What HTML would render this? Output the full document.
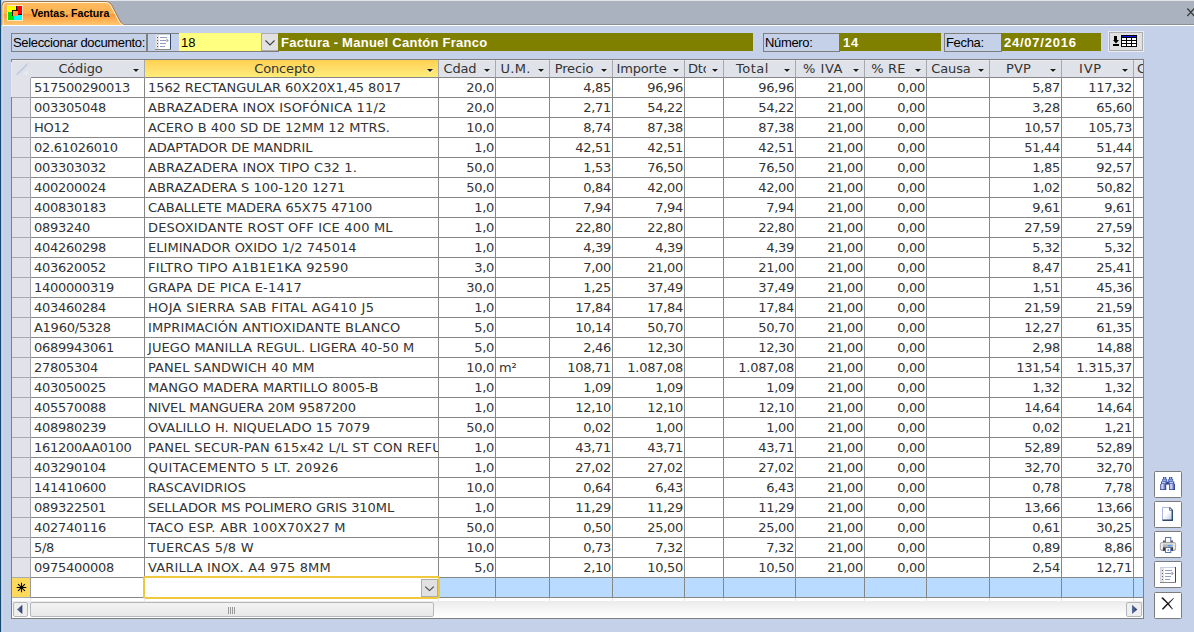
<!DOCTYPE html>
<html lang="es"><head><meta charset="utf-8"><title>Ventas. Factura</title>
<style>
html,body{margin:0;padding:0}
body{width:1194px;height:632px;overflow:hidden;background:#c4d1e9;position:relative;font-family:"Liberation Sans",sans-serif;font-size:13px;color:#000}
.a{position:absolute;box-sizing:border-box}
#tbar{left:0;top:0;width:1194px;height:25px;background:#abb2bf;border-top:1px solid #e2e5ea;border-bottom:1px solid #8a919e}
#lstrip{left:0;top:0;width:3px;height:632px;background:#b9c8d5;border-left:1px solid #154873;border-right:1px solid #d0daed}
#lstrip2{left:2px;top:25px;width:1px;height:607px;background:#9fb3d6}
#wline{left:2px;top:25px;width:1192px;height:1px;background:#fff}
.fld{height:19px;top:33px;line-height:17px;white-space:nowrap;overflow:hidden}
.lab{border:1px solid #7f7f7f;background:#c4d1e9;padding-left:1px;letter-spacing:-0.34px}
.olv{background:#808000;color:#fff;font-weight:bold;padding-left:3px;line-height:19px;height:18px}
#grid{left:11px;top:59px;width:1133px;height:560px;border:1px solid #7f7f7f;background:#fff;overflow:hidden}
.g{font-family:"DejaVu Sans","Liberation Sans",sans-serif;font-size:13px;color:#333;white-space:nowrap}
.hd{top:0;height:18px;background:#dfe2e8;border-right:1px solid #a6a9ae;border-bottom:1px solid #868686;box-shadow:inset 0 1px 0 #e9ebef;line-height:18px;text-align:center;overflow:hidden;letter-spacing:-0.15px}
.hd.sel{background:linear-gradient(#ffd050,#ffe06c 55%,#ffed7a);box-shadow:none}
.hd i{position:absolute;right:5.5px;top:9px;width:0;height:0;border-left:3px solid transparent;border-right:3px solid transparent;border-top:3.5px solid #1c1c1c;filter:drop-shadow(0 1px 0 rgba(255,255,255,.85))}
.row{left:0;width:1133px;height:20px}
.rs{left:0;top:0;width:19px;height:20px;background:#e1e3e8;border-right:1px solid #a0a4aa;border-bottom:1px solid #a8acb2}
.c{top:0;height:20px;border-right:1px solid #868686;border-bottom:1px solid #868686;line-height:19px;overflow:hidden;padding:0 1px 0 3px;letter-spacing:-0.27px}
.r{text-align:right}
.btn{left:1154px;width:28px;height:27px;background:#fff;border:1px solid #7c7c7c;border-radius:1.5px}
</style></head><body>
<div class="a" id="tbar"></div>
<div class="a" id="lstrip"></div>

<svg class="a" style="left:0;top:0" width="140" height="26" viewBox="0 0 140 26">
<defs><linearGradient id="tg" x1="0" y1="0" x2="0" y2="1"><stop offset="0" stop-color="#ffbc62"/><stop offset="0.5" stop-color="#ffb250"/><stop offset="0.52" stop-color="#fb983a"/><stop offset="0.75" stop-color="#ffb054"/><stop offset="1" stop-color="#ffc870"/></linearGradient></defs>
<path d="M2 25.500 V5.500 Q2 1.500 6 1.500 H105 C109.500 1.500 111 3.500 112.500 6.500 L119.800 20.500 C121.300 23.200 122.800 24.600 125.500 25.500 Z" fill="url(#tg)"/><path d="M2 25.500 V5.500 Q2 1.500 6 1.500 H105 C109.500 1.500 111 3.500 112.500 6.500 L119.800 20.500 C121.300 23.200 122.800 24.600 125.500 25.500" fill="none" stroke="#9a7b4f" stroke-width="1"/>
<path d="M3 25 V6 Q3 2.500 6.500 2.500 H105 C108.500 2.500 110 4 111.500 7 L118.800 21 C120.300 23.800 121.800 24.800 124 25.400" fill="none" stroke="#fff3de" stroke-width="1"/>
<rect x="7.500" y="5.500" width="15" height="15" fill="none" stroke="#ffe6c4" stroke-width="1"/>
<g shape-rendering="crispEdges"><rect x="8" y="6" width="8" height="6" fill="#ffff00"/><rect x="16" y="6" width="6" height="9" fill="#ff0000"/>
<rect x="8" y="12" width="6" height="8" fill="#00e400"/><rect x="14" y="15" width="8" height="5" fill="#00ffff"/>
<rect x="12" y="10" width="6" height="6" fill="#1a1000"/><rect x="16" y="6" width="1" height="5" fill="#1a1000"/><rect x="18" y="14" width="4" height="1" fill="#500000"/>
<rect x="13" y="11" width="5" height="5" fill="#ff9a36"/></g>
</svg>
<div class="a" style="left:31px;top:5px;font-size:10.6px;font-weight:bold;line-height:16px;white-space:nowrap">Ventas. Factura</div>
<svg class="a" style="left:1186px;top:7px" width="10" height="10" viewBox="0 0 10 10"><path d="M1.300 1.500 L8.300 9 M8.300 1.500 L1.300 9" stroke="#3c3c3c" stroke-width="1.300" fill="none"/></svg>

<div class="a" id="wline"></div>
<div class="a fld lab" style="left:11px;width:136px">Seleccionar documento:</div>
<div class="a" style="left:147px;top:33px;width:132px;height:19px;border:1px solid #7f7f7f;border-right:0"></div>
<svg class="a" style="left:155px;top:34px" width="16" height="16" viewBox="0 0 16 16" shape-rendering="crispEdges"><rect x="0" y="0" width="16" height="16" fill="#fff"/><rect x="0" y="0" width="4" height="16" fill="#e4e4e6"/><rect x="0" y="0" width="16" height="1" fill="#c6cfdf"/><rect x="0" y="0" width="1" height="16" fill="#d4d8df"/><rect x="15" y="0" width="1" height="16" fill="#2f4870"/><rect x="0" y="15" width="16" height="1" fill="#868686"/>
<g fill="#5c5c5c"><rect x="2" y="3" width="1" height="1"/><rect x="2" y="6" width="1" height="1"/><rect x="2" y="9" width="1" height="1"/><rect x="2" y="12" width="1" height="1"/></g>
<g fill="#8e9cc6"><rect x="5" y="3" width="7" height="1"/><rect x="5" y="6" width="6" height="1"/><rect x="5" y="9" width="6" height="1"/><rect x="5" y="12" width="5" height="1"/></g>
<path d="M11.5 4.5 L13.800 6.500 L11.500 8.500Z" fill="#9a9a9a" shape-rendering="auto"/></svg>
<div class="a fld" style="left:179px;width:83px;height:18px;background:#ffff80;padding-left:2px;line-height:19px">18</div>
<div class="a" style="left:261px;top:33px;width:18px;height:18px;background:#e1e1e1;border:1px solid #adadad"></div>
<svg class="a" style="left:264px;top:39px" width="12" height="8" viewBox="0 0 12 8"><path d="M1.500 1.500 L6 6 L10.500 1.500" fill="none" stroke="#404040" stroke-width="1.100"/></svg>
<div class="a fld olv" style="left:278px;width:475px;letter-spacing:0.26px">Factura - Manuel Cantón Franco</div>
<div class="a fld lab" style="left:763px;width:77px">Número:</div>
<div class="a fld olv" style="left:839px;width:102px;padding-left:4px;letter-spacing:0.76px">14</div>
<div class="a fld lab" style="left:944px;width:58px">Fecha:</div>
<div class="a fld olv" style="left:1001px;width:100px;letter-spacing:0.76px">24/07/2016</div>
<div class="a" style="left:1109px;top:32px;width:34px;height:19px;background:#e1e1e1;border:1px solid #adadad;outline:1px solid #e9ecf2;outline-offset:0"></div>
<svg class="a" style="left:1112px;top:35px" width="26" height="13" viewBox="0 0 26 13" shape-rendering="crispEdges"><g fill="#000"><rect x="2" y="1" width="3" height="4"/><rect x="1" y="9" width="6" height="2"/><path d="M1 5H7L4 8.500Z" shape-rendering="auto"/><rect x="9" y="0" width="16" height="12"/></g><rect x="10" y="1" width="14" height="1" fill="#1414e6"/><g fill="#fff"><rect x="10" y="3" width="4" height="2"/><rect x="15" y="3" width="4" height="2"/><rect x="20" y="3" width="4" height="2"/><rect x="10" y="6" width="4" height="2"/><rect x="15" y="6" width="4" height="2"/><rect x="20" y="6" width="4" height="2"/><rect x="10" y="9" width="4" height="2"/><rect x="15" y="9" width="4" height="2"/><rect x="20" y="9" width="4" height="2"/></g></svg>

<div class="a g" id="grid">
<div class="a hd" style="left:0;width:19px;height:38px;border-right:0;border-bottom:0"><svg style="position:absolute;left:4px;top:3px" width="12" height="12" viewBox="0 0 12 12"><defs><linearGradient id="cg" x1="0" y1="0" x2="1" y2="1"><stop offset="0.45" stop-color="#bcc8e0"/><stop offset="0.62" stop-color="#d9dee9"/><stop offset="1" stop-color="#eef0f5"/></linearGradient></defs><path d="M11.5 0.5V11.500H0.500Z" fill="url(#cg)"/><path d="M11.500 0.500L0.500 11.500" stroke="#b3c1df" stroke-width="1" fill="none"/></svg></div>
<div class="a hd" style="left:19px;width:114px;padding-right:14px">Código<i></i></div>
<div class="a hd sel" style="left:133px;width:294px;padding-right:14px">Concepto<i></i></div>
<div class="a hd" style="left:427px;width:57px;padding-right:14px">Cdad<i></i></div>
<div class="a hd" style="left:484px;width:54px;padding-right:14px;letter-spacing:0.30px">U.M.<i></i></div>
<div class="a hd" style="left:538px;width:63px;padding-right:14px">Precio<i></i></div>
<div class="a hd" style="left:601px;width:72px;padding-right:14px">Importe<i></i></div>
<div class="a hd" style="left:673px;width:39px;padding-right:14px"><span style="display:inline-block;width:18px;overflow:hidden;vertical-align:top">Dto</span><i></i></div>
<div class="a hd" style="left:712px;width:72px;padding-right:14px;letter-spacing:0.50px">Total<i></i></div>
<div class="a hd" style="left:784px;width:69px;padding-right:14px;letter-spacing:0.55px">% IVA<i></i></div>
<div class="a hd" style="left:853px;width:62px;padding-right:14px;letter-spacing:0.20px">% RE<i></i></div>
<div class="a hd" style="left:915px;width:63px;padding-right:14px">Causa<i></i></div>
<div class="a hd" style="left:978px;width:72px;padding-right:14px;letter-spacing:0.10px">PVP<i></i></div>
<div class="a hd" style="left:1050px;width:72px;padding-right:14px;letter-spacing:0.80px">IVP<i></i></div>
<div class="a hd" style="left:1122px;width:12px;text-align:left;padding-left:3px;border-right:0">C</div>
<div class="a row" style="top:18px"><div class="a rs"></div>
<div class="a c" style="left:19px;width:114px">517500290013</div>
<div class="a c" style="left:133px;width:294px;letter-spacing:-0.076px">1562 RECTANGULAR 60X20X1,45 8017</div>
<div class="a c r" style="left:427px;width:57px">20,0</div>
<div class="a c" style="left:484px;width:54px"></div>
<div class="a c r" style="left:538px;width:63px">4,85</div>
<div class="a c r" style="left:601px;width:72px">96,96</div>
<div class="a c r" style="left:673px;width:39px"></div>
<div class="a c r" style="left:712px;width:72px">96,96</div>
<div class="a c r" style="left:784px;width:69px">21,00</div>
<div class="a c r" style="left:853px;width:62px">0,00</div>
<div class="a c" style="left:915px;width:63px"></div>
<div class="a c r" style="left:978px;width:72px">5,87</div>
<div class="a c r" style="left:1050px;width:72px">117,32</div>
<div class="a c" style="left:1122px;width:12px;border-right:0"></div>
</div>
<div class="a row" style="top:38px"><div class="a rs"></div>
<div class="a c" style="left:19px;width:114px">003305048</div>
<div class="a c" style="left:133px;width:294px;letter-spacing:0.158px">ABRAZADERA INOX ISOFÓNICA 11/2</div>
<div class="a c r" style="left:427px;width:57px">20,0</div>
<div class="a c" style="left:484px;width:54px"></div>
<div class="a c r" style="left:538px;width:63px">2,71</div>
<div class="a c r" style="left:601px;width:72px">54,22</div>
<div class="a c r" style="left:673px;width:39px"></div>
<div class="a c r" style="left:712px;width:72px">54,22</div>
<div class="a c r" style="left:784px;width:69px">21,00</div>
<div class="a c r" style="left:853px;width:62px">0,00</div>
<div class="a c" style="left:915px;width:63px"></div>
<div class="a c r" style="left:978px;width:72px">3,28</div>
<div class="a c r" style="left:1050px;width:72px">65,60</div>
<div class="a c" style="left:1122px;width:12px;border-right:0"></div>
</div>
<div class="a row" style="top:58px"><div class="a rs"></div>
<div class="a c" style="left:19px;width:114px">HO12</div>
<div class="a c" style="left:133px;width:294px;letter-spacing:0.050px">ACERO B 400 SD DE 12MM 12 MTRS.</div>
<div class="a c r" style="left:427px;width:57px">10,0</div>
<div class="a c" style="left:484px;width:54px"></div>
<div class="a c r" style="left:538px;width:63px">8,74</div>
<div class="a c r" style="left:601px;width:72px">87,38</div>
<div class="a c r" style="left:673px;width:39px"></div>
<div class="a c r" style="left:712px;width:72px">87,38</div>
<div class="a c r" style="left:784px;width:69px">21,00</div>
<div class="a c r" style="left:853px;width:62px">0,00</div>
<div class="a c" style="left:915px;width:63px"></div>
<div class="a c r" style="left:978px;width:72px">10,57</div>
<div class="a c r" style="left:1050px;width:72px">105,73</div>
<div class="a c" style="left:1122px;width:12px;border-right:0"></div>
</div>
<div class="a row" style="top:78px"><div class="a rs"></div>
<div class="a c" style="left:19px;width:114px">02.61026010</div>
<div class="a c" style="left:133px;width:294px;letter-spacing:-0.133px">ADAPTADOR DE MANDRIL</div>
<div class="a c r" style="left:427px;width:57px">1,0</div>
<div class="a c" style="left:484px;width:54px"></div>
<div class="a c r" style="left:538px;width:63px">42,51</div>
<div class="a c r" style="left:601px;width:72px">42,51</div>
<div class="a c r" style="left:673px;width:39px"></div>
<div class="a c r" style="left:712px;width:72px">42,51</div>
<div class="a c r" style="left:784px;width:69px">21,00</div>
<div class="a c r" style="left:853px;width:62px">0,00</div>
<div class="a c" style="left:915px;width:63px"></div>
<div class="a c r" style="left:978px;width:72px">51,44</div>
<div class="a c r" style="left:1050px;width:72px">51,44</div>
<div class="a c" style="left:1122px;width:12px;border-right:0"></div>
</div>
<div class="a row" style="top:98px"><div class="a rs"></div>
<div class="a c" style="left:19px;width:114px">003303032</div>
<div class="a c" style="left:133px;width:294px;letter-spacing:0.153px">ABRAZADERA INOX TIPO C32 1.</div>
<div class="a c r" style="left:427px;width:57px">50,0</div>
<div class="a c" style="left:484px;width:54px"></div>
<div class="a c r" style="left:538px;width:63px">1,53</div>
<div class="a c r" style="left:601px;width:72px">76,50</div>
<div class="a c r" style="left:673px;width:39px"></div>
<div class="a c r" style="left:712px;width:72px">76,50</div>
<div class="a c r" style="left:784px;width:69px">21,00</div>
<div class="a c r" style="left:853px;width:62px">0,00</div>
<div class="a c" style="left:915px;width:63px"></div>
<div class="a c r" style="left:978px;width:72px">1,85</div>
<div class="a c r" style="left:1050px;width:72px">92,57</div>
<div class="a c" style="left:1122px;width:12px;border-right:0"></div>
</div>
<div class="a row" style="top:118px"><div class="a rs"></div>
<div class="a c" style="left:19px;width:114px">400200024</div>
<div class="a c" style="left:133px;width:294px;letter-spacing:0.022px">ABRAZADERA S 100-120 1271</div>
<div class="a c r" style="left:427px;width:57px">50,0</div>
<div class="a c" style="left:484px;width:54px"></div>
<div class="a c r" style="left:538px;width:63px">0,84</div>
<div class="a c r" style="left:601px;width:72px">42,00</div>
<div class="a c r" style="left:673px;width:39px"></div>
<div class="a c r" style="left:712px;width:72px">42,00</div>
<div class="a c r" style="left:784px;width:69px">21,00</div>
<div class="a c r" style="left:853px;width:62px">0,00</div>
<div class="a c" style="left:915px;width:63px"></div>
<div class="a c r" style="left:978px;width:72px">1,02</div>
<div class="a c r" style="left:1050px;width:72px">50,82</div>
<div class="a c" style="left:1122px;width:12px;border-right:0"></div>
</div>
<div class="a row" style="top:138px"><div class="a rs"></div>
<div class="a c" style="left:19px;width:114px">400830183</div>
<div class="a c" style="left:133px;width:294px;letter-spacing:-0.070px">CABALLETE MADERA 65X75 47100</div>
<div class="a c r" style="left:427px;width:57px">1,0</div>
<div class="a c" style="left:484px;width:54px"></div>
<div class="a c r" style="left:538px;width:63px">7,94</div>
<div class="a c r" style="left:601px;width:72px">7,94</div>
<div class="a c r" style="left:673px;width:39px"></div>
<div class="a c r" style="left:712px;width:72px">7,94</div>
<div class="a c r" style="left:784px;width:69px">21,00</div>
<div class="a c r" style="left:853px;width:62px">0,00</div>
<div class="a c" style="left:915px;width:63px"></div>
<div class="a c r" style="left:978px;width:72px">9,61</div>
<div class="a c r" style="left:1050px;width:72px">9,61</div>
<div class="a c" style="left:1122px;width:12px;border-right:0"></div>
</div>
<div class="a row" style="top:158px"><div class="a rs"></div>
<div class="a c" style="left:19px;width:114px">0893240</div>
<div class="a c" style="left:133px;width:294px;letter-spacing:0.190px">DESOXIDANTE ROST OFF ICE 400 ML</div>
<div class="a c r" style="left:427px;width:57px">1,0</div>
<div class="a c" style="left:484px;width:54px"></div>
<div class="a c r" style="left:538px;width:63px">22,80</div>
<div class="a c r" style="left:601px;width:72px">22,80</div>
<div class="a c r" style="left:673px;width:39px"></div>
<div class="a c r" style="left:712px;width:72px">22,80</div>
<div class="a c r" style="left:784px;width:69px">21,00</div>
<div class="a c r" style="left:853px;width:62px">0,00</div>
<div class="a c" style="left:915px;width:63px"></div>
<div class="a c r" style="left:978px;width:72px">27,59</div>
<div class="a c r" style="left:1050px;width:72px">27,59</div>
<div class="a c" style="left:1122px;width:12px;border-right:0"></div>
</div>
<div class="a row" style="top:178px"><div class="a rs"></div>
<div class="a c" style="left:19px;width:114px">404260298</div>
<div class="a c" style="left:133px;width:294px;letter-spacing:0.038px">ELIMINADOR OXIDO 1/2 745014</div>
<div class="a c r" style="left:427px;width:57px">1,0</div>
<div class="a c" style="left:484px;width:54px"></div>
<div class="a c r" style="left:538px;width:63px">4,39</div>
<div class="a c r" style="left:601px;width:72px">4,39</div>
<div class="a c r" style="left:673px;width:39px"></div>
<div class="a c r" style="left:712px;width:72px">4,39</div>
<div class="a c r" style="left:784px;width:69px">21,00</div>
<div class="a c r" style="left:853px;width:62px">0,00</div>
<div class="a c" style="left:915px;width:63px"></div>
<div class="a c r" style="left:978px;width:72px">5,32</div>
<div class="a c r" style="left:1050px;width:72px">5,32</div>
<div class="a c" style="left:1122px;width:12px;border-right:0"></div>
</div>
<div class="a row" style="top:198px"><div class="a rs"></div>
<div class="a c" style="left:19px;width:114px">403620052</div>
<div class="a c" style="left:133px;width:294px;letter-spacing:0.186px">FILTRO TIPO A1B1E1KA 92590</div>
<div class="a c r" style="left:427px;width:57px">3,0</div>
<div class="a c" style="left:484px;width:54px"></div>
<div class="a c r" style="left:538px;width:63px">7,00</div>
<div class="a c r" style="left:601px;width:72px">21,00</div>
<div class="a c r" style="left:673px;width:39px"></div>
<div class="a c r" style="left:712px;width:72px">21,00</div>
<div class="a c r" style="left:784px;width:69px">21,00</div>
<div class="a c r" style="left:853px;width:62px">0,00</div>
<div class="a c" style="left:915px;width:63px"></div>
<div class="a c r" style="left:978px;width:72px">8,47</div>
<div class="a c r" style="left:1050px;width:72px">25,41</div>
<div class="a c" style="left:1122px;width:12px;border-right:0"></div>
</div>
<div class="a row" style="top:218px"><div class="a rs"></div>
<div class="a c" style="left:19px;width:114px">1400000319</div>
<div class="a c" style="left:133px;width:294px;letter-spacing:0.214px">GRAPA DE PICA E-1417</div>
<div class="a c r" style="left:427px;width:57px">30,0</div>
<div class="a c" style="left:484px;width:54px"></div>
<div class="a c r" style="left:538px;width:63px">1,25</div>
<div class="a c r" style="left:601px;width:72px">37,49</div>
<div class="a c r" style="left:673px;width:39px"></div>
<div class="a c r" style="left:712px;width:72px">37,49</div>
<div class="a c r" style="left:784px;width:69px">21,00</div>
<div class="a c r" style="left:853px;width:62px">0,00</div>
<div class="a c" style="left:915px;width:63px"></div>
<div class="a c r" style="left:978px;width:72px">1,51</div>
<div class="a c r" style="left:1050px;width:72px">45,36</div>
<div class="a c" style="left:1122px;width:12px;border-right:0"></div>
</div>
<div class="a row" style="top:238px"><div class="a rs"></div>
<div class="a c" style="left:19px;width:114px">403460284</div>
<div class="a c" style="left:133px;width:294px;letter-spacing:0.337px">HOJA SIERRA SAB FITAL AG410 J5</div>
<div class="a c r" style="left:427px;width:57px">1,0</div>
<div class="a c" style="left:484px;width:54px"></div>
<div class="a c r" style="left:538px;width:63px">17,84</div>
<div class="a c r" style="left:601px;width:72px">17,84</div>
<div class="a c r" style="left:673px;width:39px"></div>
<div class="a c r" style="left:712px;width:72px">17,84</div>
<div class="a c r" style="left:784px;width:69px">21,00</div>
<div class="a c r" style="left:853px;width:62px">0,00</div>
<div class="a c" style="left:915px;width:63px"></div>
<div class="a c r" style="left:978px;width:72px">21,59</div>
<div class="a c r" style="left:1050px;width:72px">21,59</div>
<div class="a c" style="left:1122px;width:12px;border-right:0"></div>
</div>
<div class="a row" style="top:258px"><div class="a rs"></div>
<div class="a c" style="left:19px;width:114px">A1960/5328</div>
<div class="a c" style="left:133px;width:294px;letter-spacing:0.130px">IMPRIMACIÓN ANTIOXIDANTE BLANCO</div>
<div class="a c r" style="left:427px;width:57px">5,0</div>
<div class="a c" style="left:484px;width:54px"></div>
<div class="a c r" style="left:538px;width:63px">10,14</div>
<div class="a c r" style="left:601px;width:72px">50,70</div>
<div class="a c r" style="left:673px;width:39px"></div>
<div class="a c r" style="left:712px;width:72px">50,70</div>
<div class="a c r" style="left:784px;width:69px">21,00</div>
<div class="a c r" style="left:853px;width:62px">0,00</div>
<div class="a c" style="left:915px;width:63px"></div>
<div class="a c r" style="left:978px;width:72px">12,27</div>
<div class="a c r" style="left:1050px;width:72px">61,35</div>
<div class="a c" style="left:1122px;width:12px;border-right:0"></div>
</div>
<div class="a row" style="top:278px"><div class="a rs"></div>
<div class="a c" style="left:19px;width:114px">0689943061</div>
<div class="a c" style="left:133px;width:294px;letter-spacing:0.071px">JUEGO MANILLA REGUL. LIGERA 40-50 M</div>
<div class="a c r" style="left:427px;width:57px">5,0</div>
<div class="a c" style="left:484px;width:54px"></div>
<div class="a c r" style="left:538px;width:63px">2,46</div>
<div class="a c r" style="left:601px;width:72px">12,30</div>
<div class="a c r" style="left:673px;width:39px"></div>
<div class="a c r" style="left:712px;width:72px">12,30</div>
<div class="a c r" style="left:784px;width:69px">21,00</div>
<div class="a c r" style="left:853px;width:62px">0,00</div>
<div class="a c" style="left:915px;width:63px"></div>
<div class="a c r" style="left:978px;width:72px">2,98</div>
<div class="a c r" style="left:1050px;width:72px">14,88</div>
<div class="a c" style="left:1122px;width:12px;border-right:0"></div>
</div>
<div class="a row" style="top:298px"><div class="a rs"></div>
<div class="a c" style="left:19px;width:114px">27805304</div>
<div class="a c" style="left:133px;width:294px;letter-spacing:0.077px">PANEL SANDWICH 40 MM</div>
<div class="a c r" style="left:427px;width:57px">10,0</div>
<div class="a c" style="left:484px;width:54px">m²</div>
<div class="a c r" style="left:538px;width:63px">108,71</div>
<div class="a c r" style="left:601px;width:72px">1.087,08</div>
<div class="a c r" style="left:673px;width:39px"></div>
<div class="a c r" style="left:712px;width:72px">1.087,08</div>
<div class="a c r" style="left:784px;width:69px">21,00</div>
<div class="a c r" style="left:853px;width:62px">0,00</div>
<div class="a c" style="left:915px;width:63px"></div>
<div class="a c r" style="left:978px;width:72px">131,54</div>
<div class="a c r" style="left:1050px;width:72px">1.315,37</div>
<div class="a c" style="left:1122px;width:12px;border-right:0"></div>
</div>
<div class="a row" style="top:318px"><div class="a rs"></div>
<div class="a c" style="left:19px;width:114px">403050025</div>
<div class="a c" style="left:133px;width:294px;letter-spacing:0.063px">MANGO MADERA MARTILLO 8005-B</div>
<div class="a c r" style="left:427px;width:57px">1,0</div>
<div class="a c" style="left:484px;width:54px"></div>
<div class="a c r" style="left:538px;width:63px">1,09</div>
<div class="a c r" style="left:601px;width:72px">1,09</div>
<div class="a c r" style="left:673px;width:39px"></div>
<div class="a c r" style="left:712px;width:72px">1,09</div>
<div class="a c r" style="left:784px;width:69px">21,00</div>
<div class="a c r" style="left:853px;width:62px">0,00</div>
<div class="a c" style="left:915px;width:63px"></div>
<div class="a c r" style="left:978px;width:72px">1,32</div>
<div class="a c r" style="left:1050px;width:72px">1,32</div>
<div class="a c" style="left:1122px;width:12px;border-right:0"></div>
</div>
<div class="a row" style="top:338px"><div class="a rs"></div>
<div class="a c" style="left:19px;width:114px">405570088</div>
<div class="a c" style="left:133px;width:294px;letter-spacing:-0.118px">NIVEL MANGUERA 20M 9587200</div>
<div class="a c r" style="left:427px;width:57px">1,0</div>
<div class="a c" style="left:484px;width:54px"></div>
<div class="a c r" style="left:538px;width:63px">12,10</div>
<div class="a c r" style="left:601px;width:72px">12,10</div>
<div class="a c r" style="left:673px;width:39px"></div>
<div class="a c r" style="left:712px;width:72px">12,10</div>
<div class="a c r" style="left:784px;width:69px">21,00</div>
<div class="a c r" style="left:853px;width:62px">0,00</div>
<div class="a c" style="left:915px;width:63px"></div>
<div class="a c r" style="left:978px;width:72px">14,64</div>
<div class="a c r" style="left:1050px;width:72px">14,64</div>
<div class="a c" style="left:1122px;width:12px;border-right:0"></div>
</div>
<div class="a row" style="top:358px"><div class="a rs"></div>
<div class="a c" style="left:19px;width:114px">408980239</div>
<div class="a c" style="left:133px;width:294px;letter-spacing:0.059px">OVALILLO H. NIQUELADO 15 7079</div>
<div class="a c r" style="left:427px;width:57px">50,0</div>
<div class="a c" style="left:484px;width:54px"></div>
<div class="a c r" style="left:538px;width:63px">0,02</div>
<div class="a c r" style="left:601px;width:72px">1,00</div>
<div class="a c r" style="left:673px;width:39px"></div>
<div class="a c r" style="left:712px;width:72px">1,00</div>
<div class="a c r" style="left:784px;width:69px">21,00</div>
<div class="a c r" style="left:853px;width:62px">0,00</div>
<div class="a c" style="left:915px;width:63px"></div>
<div class="a c r" style="left:978px;width:72px">0,02</div>
<div class="a c r" style="left:1050px;width:72px">1,21</div>
<div class="a c" style="left:1122px;width:12px;border-right:0"></div>
</div>
<div class="a row" style="top:378px"><div class="a rs"></div>
<div class="a c" style="left:19px;width:114px">161200AA0100</div>
<div class="a c" style="left:133px;width:294px;letter-spacing:0.180px">PANEL SECUR-PAN 615x42 L/L ST CON REFU</div>
<div class="a c r" style="left:427px;width:57px">1,0</div>
<div class="a c" style="left:484px;width:54px"></div>
<div class="a c r" style="left:538px;width:63px">43,71</div>
<div class="a c r" style="left:601px;width:72px">43,71</div>
<div class="a c r" style="left:673px;width:39px"></div>
<div class="a c r" style="left:712px;width:72px">43,71</div>
<div class="a c r" style="left:784px;width:69px">21,00</div>
<div class="a c r" style="left:853px;width:62px">0,00</div>
<div class="a c" style="left:915px;width:63px"></div>
<div class="a c r" style="left:978px;width:72px">52,89</div>
<div class="a c r" style="left:1050px;width:72px">52,89</div>
<div class="a c" style="left:1122px;width:12px;border-right:0"></div>
</div>
<div class="a row" style="top:398px"><div class="a rs"></div>
<div class="a c" style="left:19px;width:114px">403290104</div>
<div class="a c" style="left:133px;width:294px;letter-spacing:0.365px">QUITACEMENTO 5 LT. 20926</div>
<div class="a c r" style="left:427px;width:57px">1,0</div>
<div class="a c" style="left:484px;width:54px"></div>
<div class="a c r" style="left:538px;width:63px">27,02</div>
<div class="a c r" style="left:601px;width:72px">27,02</div>
<div class="a c r" style="left:673px;width:39px"></div>
<div class="a c r" style="left:712px;width:72px">27,02</div>
<div class="a c r" style="left:784px;width:69px">21,00</div>
<div class="a c r" style="left:853px;width:62px">0,00</div>
<div class="a c" style="left:915px;width:63px"></div>
<div class="a c r" style="left:978px;width:72px">32,70</div>
<div class="a c r" style="left:1050px;width:72px">32,70</div>
<div class="a c" style="left:1122px;width:12px;border-right:0"></div>
</div>
<div class="a row" style="top:418px"><div class="a rs"></div>
<div class="a c" style="left:19px;width:114px">141410600</div>
<div class="a c" style="left:133px;width:294px;letter-spacing:0.094px">RASCAVIDRIOS</div>
<div class="a c r" style="left:427px;width:57px">10,0</div>
<div class="a c" style="left:484px;width:54px"></div>
<div class="a c r" style="left:538px;width:63px">0,64</div>
<div class="a c r" style="left:601px;width:72px">6,43</div>
<div class="a c r" style="left:673px;width:39px"></div>
<div class="a c r" style="left:712px;width:72px">6,43</div>
<div class="a c r" style="left:784px;width:69px">21,00</div>
<div class="a c r" style="left:853px;width:62px">0,00</div>
<div class="a c" style="left:915px;width:63px"></div>
<div class="a c r" style="left:978px;width:72px">0,78</div>
<div class="a c r" style="left:1050px;width:72px">7,78</div>
<div class="a c" style="left:1122px;width:12px;border-right:0"></div>
</div>
<div class="a row" style="top:438px"><div class="a rs"></div>
<div class="a c" style="left:19px;width:114px">089322501</div>
<div class="a c" style="left:133px;width:294px;letter-spacing:-0.050px">SELLADOR MS POLIMERO GRIS 310ML</div>
<div class="a c r" style="left:427px;width:57px">1,0</div>
<div class="a c" style="left:484px;width:54px"></div>
<div class="a c r" style="left:538px;width:63px">11,29</div>
<div class="a c r" style="left:601px;width:72px">11,29</div>
<div class="a c r" style="left:673px;width:39px"></div>
<div class="a c r" style="left:712px;width:72px">11,29</div>
<div class="a c r" style="left:784px;width:69px">21,00</div>
<div class="a c r" style="left:853px;width:62px">0,00</div>
<div class="a c" style="left:915px;width:63px"></div>
<div class="a c r" style="left:978px;width:72px">13,66</div>
<div class="a c r" style="left:1050px;width:72px">13,66</div>
<div class="a c" style="left:1122px;width:12px;border-right:0"></div>
</div>
<div class="a row" style="top:458px"><div class="a rs"></div>
<div class="a c" style="left:19px;width:114px">402740116</div>
<div class="a c" style="left:133px;width:294px;letter-spacing:0.247px">TACO ESP. ABR 100X70X27 M</div>
<div class="a c r" style="left:427px;width:57px">50,0</div>
<div class="a c" style="left:484px;width:54px"></div>
<div class="a c r" style="left:538px;width:63px">0,50</div>
<div class="a c r" style="left:601px;width:72px">25,00</div>
<div class="a c r" style="left:673px;width:39px"></div>
<div class="a c r" style="left:712px;width:72px">25,00</div>
<div class="a c r" style="left:784px;width:69px">21,00</div>
<div class="a c r" style="left:853px;width:62px">0,00</div>
<div class="a c" style="left:915px;width:63px"></div>
<div class="a c r" style="left:978px;width:72px">0,61</div>
<div class="a c r" style="left:1050px;width:72px">30,25</div>
<div class="a c" style="left:1122px;width:12px;border-right:0"></div>
</div>
<div class="a row" style="top:478px"><div class="a rs"></div>
<div class="a c" style="left:19px;width:114px">5/8</div>
<div class="a c" style="left:133px;width:294px;letter-spacing:0.280px">TUERCAS 5/8 W</div>
<div class="a c r" style="left:427px;width:57px">10,0</div>
<div class="a c" style="left:484px;width:54px"></div>
<div class="a c r" style="left:538px;width:63px">0,73</div>
<div class="a c r" style="left:601px;width:72px">7,32</div>
<div class="a c r" style="left:673px;width:39px"></div>
<div class="a c r" style="left:712px;width:72px">7,32</div>
<div class="a c r" style="left:784px;width:69px">21,00</div>
<div class="a c r" style="left:853px;width:62px">0,00</div>
<div class="a c" style="left:915px;width:63px"></div>
<div class="a c r" style="left:978px;width:72px">0,89</div>
<div class="a c r" style="left:1050px;width:72px">8,86</div>
<div class="a c" style="left:1122px;width:12px;border-right:0"></div>
</div>
<div class="a row" style="top:498px"><div class="a rs"></div>
<div class="a c" style="left:19px;width:114px">0975400008</div>
<div class="a c" style="left:133px;width:294px;letter-spacing:0.173px">VARILLA INOX. A4 975 8MM</div>
<div class="a c r" style="left:427px;width:57px">5,0</div>
<div class="a c" style="left:484px;width:54px"></div>
<div class="a c r" style="left:538px;width:63px">2,10</div>
<div class="a c r" style="left:601px;width:72px">10,50</div>
<div class="a c r" style="left:673px;width:39px"></div>
<div class="a c r" style="left:712px;width:72px">10,50</div>
<div class="a c r" style="left:784px;width:69px">21,00</div>
<div class="a c r" style="left:853px;width:62px">0,00</div>
<div class="a c" style="left:915px;width:63px"></div>
<div class="a c r" style="left:978px;width:72px">2,54</div>
<div class="a c r" style="left:1050px;width:72px">12,71</div>
<div class="a c" style="left:1122px;width:12px;border-right:0"></div>
</div>
<div class="a row" style="top:518px;background:#b9dbff"><div class="a rs" style="background:#ffd95c;border-right-color:#9a9a9a"><svg style="position:absolute;left:4px;top:4px" width="11" height="11" viewBox="0 0 11 11"><path d="M5.500 0.700V10.300M0.700 5.500H10.300M2.100 2.100L8.900 8.900M8.900 2.100L2.100 8.900" stroke="#000" stroke-width="1.050" fill="none"/><circle cx="5.500" cy="5.500" r="1.500" fill="#000"/></svg></div>
<div class="a c" style="left:19px;width:114px;background:#fff"></div>
<div class="a c" style="left:133px;width:294px;background:#fff"></div>
<div class="a c" style="left:427px;width:57px"></div>
<div class="a c" style="left:484px;width:54px"></div>
<div class="a c" style="left:538px;width:63px"></div>
<div class="a c" style="left:601px;width:72px"></div>
<div class="a c" style="left:673px;width:39px"></div>
<div class="a c" style="left:712px;width:72px"></div>
<div class="a c" style="left:784px;width:69px"></div>
<div class="a c" style="left:853px;width:62px"></div>
<div class="a c" style="left:915px;width:63px"></div>
<div class="a c" style="left:978px;width:72px"></div>
<div class="a c" style="left:1050px;width:72px"></div>
<div class="a c" style="left:1122px;width:12px;border-right:0"></div>
<div class="a" style="left:131px;top:-2px;width:297px;height:23px;border:2px solid #efc83c;border-radius:2px;background:#fff"></div>
<div class="a" style="left:409px;top:1px;width:17px;height:18px;background:#e1e1e1;border:1px solid #adadad"></div><svg class="a" style="left:412px;top:7px" width="11" height="8" viewBox="0 0 11 8"><path d="M1.200 1.600 L5.500 5.600 L9.800 1.600" fill="none" stroke="#404040" stroke-width="1.100"/></svg>
</div>
<div class="a" style="left:18px;top:538px;width:1px;height:3px;background:#e6e6e6"></div>
<div class="a" style="left:132px;top:538px;width:1px;height:3px;background:#e6e6e6"></div>
<div class="a" style="left:426px;top:538px;width:1px;height:3px;background:#e6e6e6"></div>
<div class="a" style="left:483px;top:538px;width:1px;height:3px;background:#e6e6e6"></div>
<div class="a" style="left:537px;top:538px;width:1px;height:3px;background:#e6e6e6"></div>
<div class="a" style="left:600px;top:538px;width:1px;height:3px;background:#e6e6e6"></div>
<div class="a" style="left:672px;top:538px;width:1px;height:3px;background:#e6e6e6"></div>
<div class="a" style="left:711px;top:538px;width:1px;height:3px;background:#e6e6e6"></div>
<div class="a" style="left:783px;top:538px;width:1px;height:3px;background:#e6e6e6"></div>
<div class="a" style="left:852px;top:538px;width:1px;height:3px;background:#e6e6e6"></div>
<div class="a" style="left:914px;top:538px;width:1px;height:3px;background:#e6e6e6"></div>
<div class="a" style="left:977px;top:538px;width:1px;height:3px;background:#e6e6e6"></div>
<div class="a" style="left:1049px;top:538px;width:1px;height:3px;background:#e6e6e6"></div>
<div class="a" style="left:1121px;top:538px;width:1px;height:3px;background:#e6e6e6"></div>
<div class="a" style="left:0;top:541px;width:1131px;height:17px;background:linear-gradient(#ebebeb,#f8f8f8 60%,#fff)"></div>
<div class="a" style="left:1px;top:542px;width:15px;height:15px;background:#efefef;border:1px solid #b4b7bc;border-radius:2px"></div>
<svg class="a" style="left:4px;top:544px" width="8" height="11" viewBox="0 0 8 11"><defs><linearGradient id="la" x1="0" y1="0" x2="1" y2="0"><stop offset="0" stop-color="#6a7fb0"/><stop offset="1" stop-color="#2d3c66"/></linearGradient></defs><path d="M6.300 0.800V10L0.900 5.400Z" fill="url(#la)"/></svg>
<div class="a" style="left:1114px;top:542px;width:16px;height:15px;background:#efefef;border:1px solid #b4b7bc;border-radius:2px"></div>
<svg class="a" style="left:1119px;top:544px" width="8" height="11" viewBox="0 0 8 11"><defs><linearGradient id="ra" x1="0" y1="0" x2="1" y2="0"><stop offset="0" stop-color="#5a6e9f"/><stop offset="1" stop-color="#2d3c66"/></linearGradient></defs><path d="M1 0.800V10L6.400 5.400Z" fill="url(#ra)"/></svg>
<div class="a" style="left:18px;top:542px;width:404px;height:15px;background:linear-gradient(#f3f3f3,#e8e8e8);border:1px solid #b4b7bc;border-radius:2px"></div>
<svg class="a" style="left:216px;top:547px" width="8" height="7" viewBox="0 0 8 7"><path d="M0.500 0V7M2.500 0V7M4.500 0V7M6.500 0V7" stroke="#9a9a9a"/></svg>

</div>
<div class="a" style="left:11px;top:62px;width:1px;height:35px;background:#e6e9ef"></div>
<div class="a btn" style="top:471px"><svg width="26" height="25" viewBox="0 0 26 25"><defs><linearGradient id="bb" x1="0" y1="0" x2="1" y2="0"><stop offset="0" stop-color="#22388f"/><stop offset="0.3" stop-color="#dfe6f8"/><stop offset="0.6" stop-color="#8fa1da"/><stop offset="1" stop-color="#1c2f85"/></linearGradient></defs><g transform="translate(5,5)"><rect x="6" y="4.800" width="3" height="2.700" fill="#1d2f7a"/><rect x="3" y="0" width="3.300" height="2.200" fill="#3a50aa"/><rect x="4" y="0.600" width="1.200" height="1" fill="#eef2fc"/><rect x="2.200" y="2" width="5" height="2.600" fill="#4962ba"/><rect x="3" y="2.700" width="3.200" height="0.900" fill="#c9d3f0"/><rect x="1" y="4.500" width="6.500" height="2.600" fill="#3450a6"/><rect x="2" y="5.200" width="3.600" height="1.100" fill="#e4e9f8"/><rect x="0.200" y="7" width="6" height="6" fill="url(#bb)"/><rect x="0.200" y="12.300" width="6" height="0.700" fill="#2a3f95"/><rect x="9" y="0" width="3.300" height="2.200" fill="#3a50aa"/><rect x="10" y="0.600" width="1.200" height="1" fill="#eef2fc"/><rect x="8.200" y="2" width="5" height="2.600" fill="#4962ba"/><rect x="9.200" y="2.700" width="3.200" height="0.900" fill="#c9d3f0"/><rect x="7.800" y="4.500" width="6.500" height="2.600" fill="#3450a6"/><rect x="9.500" y="5.200" width="3.600" height="1.100" fill="#e4e9f8"/><rect x="9" y="7" width="6" height="6" fill="url(#bb)"/><rect x="9" y="12.300" width="6" height="0.700" fill="#2a3f95"/></g></svg></div>
<div class="a btn" style="top:501px"><svg width="26" height="25" viewBox="0 0 26 25"><defs><linearGradient id="pg" x1="0" y1="0" x2="1" y2="1"><stop offset="0.450" stop-color="#ffffff"/><stop offset="1" stop-color="#b9c4da"/></linearGradient></defs><g transform="translate(7,5)"><path d="M0.500 0.500H7.500L10.300 3.300V13.300H0.500Z" fill="url(#pg)"/><path d="M0.500 13.500V0.500H7.500" fill="none" stroke="#a9b9de" stroke-width="1"/><path d="M7.500 0.500L10.300 3.300V13.300H0.500" fill="none" stroke="#2f4870" stroke-width="1.400"/><path d="M7.500 0.800V3.300H10" fill="#eef1f8" stroke="#4a6088" stroke-width="0.800"/></g></svg></div>
<div class="a btn" style="top:531px"><svg width="26" height="25" viewBox="0 0 26 25"><defs><linearGradient id="pr" x1="0" y1="0" x2="0" y2="1"><stop offset="0" stop-color="#f2f2f2"/><stop offset="0.450" stop-color="#a8a8a8"/><stop offset="0.600" stop-color="#d2d2d2"/><stop offset="1" stop-color="#9a9a9a"/></linearGradient></defs><g transform="translate(5,5)"><rect x="3" y="3.500" width="10" height="2.500" fill="#5a5a5a"/><rect x="5.500" y="0.500" width="5.300" height="5.500" fill="#fff" stroke="#5b74a8" stroke-width="1"/><rect x="0.400" y="5.400" width="15.200" height="8.200" rx="1.800" fill="url(#pr)" stroke="#8a8a8a" stroke-width="0.800"/><rect x="0.800" y="6.200" width="2" height="6.500" rx="1" fill="#f4f4f4" opacity="0.850"/><rect x="13.200" y="6.200" width="2" height="6.500" rx="1" fill="#f4f4f4" opacity="0.850"/><rect x="3" y="10.300" width="10" height="3.500" fill="#3a3a3a"/><rect x="8" y="8" width="3" height="1.200" fill="#3c9bf0"/><rect x="5.500" y="10.500" width="5.300" height="5" fill="#fff" stroke="#5b74a8" stroke-width="1"/><rect x="7.600" y="12.400" width="1.300" height="1.300" fill="#3050e0"/></g></svg></div>
<div class="a btn" style="top:561px"><svg width="26" height="25" viewBox="0 0 26 25"><g transform="translate(5,5)" shape-rendering="crispEdges"><rect x="0" y="0" width="16" height="16" fill="#fff"/><rect x="0" y="0" width="4" height="16" fill="#e4e4e6"/><rect x="0" y="0" width="16" height="1" fill="#c6cfdf"/><rect x="0" y="0" width="1" height="16" fill="#d4d8df"/><rect x="15" y="0" width="1" height="16" fill="#2f4870"/><rect x="0" y="15" width="16" height="1" fill="#868686"/><g fill="#5c5c5c"><rect x="2" y="3" width="1" height="1"/><rect x="2" y="6" width="1" height="1"/><rect x="2" y="9" width="1" height="1"/><rect x="2" y="12" width="1" height="1"/></g><g fill="#8e9cc6"><rect x="5" y="3" width="7" height="1"/><rect x="5" y="6" width="6" height="1"/><rect x="5" y="9" width="6" height="1"/><rect x="5" y="12" width="5" height="1"/></g><path d="M11.500 4.500 L13.800 6.500 L11.500 8.500Z" fill="#9a9a9a" shape-rendering="auto"/></g></svg></div>
<div class="a btn" style="top:592px"><svg width="26" height="25" viewBox="0 0 26 25"><path d="M6.200 5 L7.800 4.300 L13.200 9.800 L18.300 4.900 L18.800 5.500 L14 10.700 L17.900 16 L17.300 16.400 L12.900 11.700 L8.600 16.300 Q7.400 17 7 15.700 L12 10.600 Z" fill="#1a1a1a"/></svg></div>
</body></html>
